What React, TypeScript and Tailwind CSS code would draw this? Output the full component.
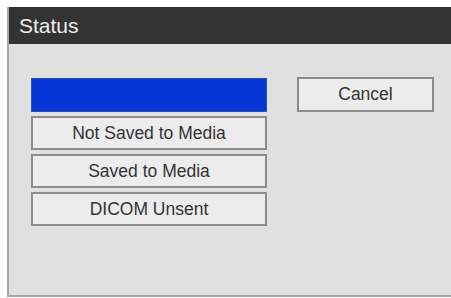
import React from 'react';

const items = ['Not Saved to Media', 'Saved to Media', 'DICOM Unsent'];

const btn =
  'flex h-[34px] items-center justify-center border-2 border-[#8c8c8c] bg-[#ececec] text-[17.5px] text-[#333]';

export default function App() {
  return (
    <div
      className="h-[298px] w-[451px] overflow-hidden bg-white pl-[7px] pt-[7px]"
      style={{ fontFamily: '"Liberation Sans", Arial, sans-serif' }}
    >
      <div className="flex h-[290px] w-[445px] flex-col border-b-2 border-l-2 border-[#a6a6a6]">
        <div className="flex h-[37px] items-center bg-[#333333] pl-[10px] text-[21px] text-[#eeeeee]">
          Status
        </div>
        <div className="flex flex-1 items-start gap-[30px] bg-[#e0e0e0] pl-[22px] pt-[34px]">
          <div className="flex w-[236px] flex-col gap-[4px]">
            <div className="h-[34px] border border-[#2d4fa8] bg-[#0636d6]" />
            {items.map((t) => (
              <div key={t} className={btn}>
                {t}
              </div>
            ))}
          </div>
          <div className={`${btn} -mt-px h-[35px] w-[137px]`}>Cancel</div>
        </div>
      </div>
    </div>
  );
}
